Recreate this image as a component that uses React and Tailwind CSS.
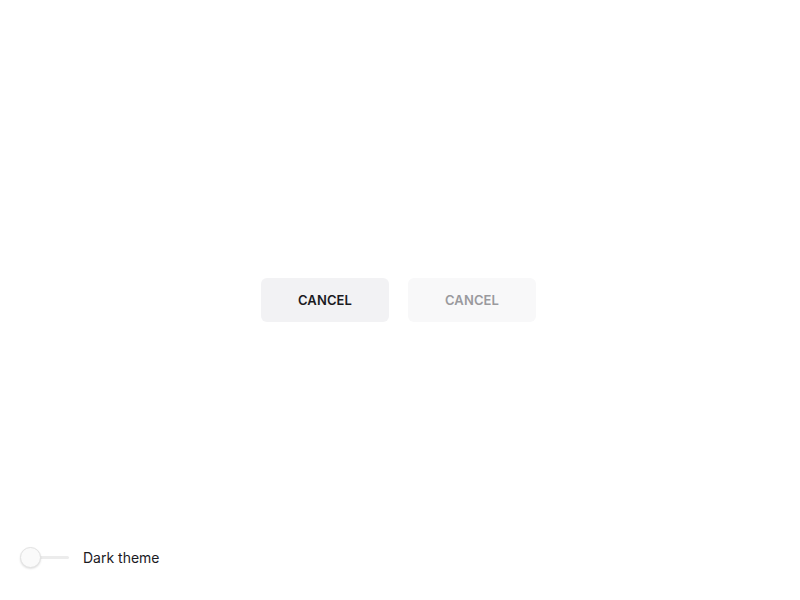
import { useState } from 'react';

const App = () => {
  const [dark, setDark] = useState(false);

  return (
    <div className="relative h-[600px] w-full bg-white font-['Inter',sans-serif]">
      <div className="flex h-full items-center justify-center gap-[19px] pr-[3px]">
        <button className="h-[44px] w-[128px] rounded-[6px] bg-[#f2f2f4] pt-[2px] text-[13px] font-semibold tracking-[0.1px] text-[#1b1b1f]">
          CANCEL
        </button>
        <button disabled className="h-[44px] w-[128px] rounded-[6px] bg-[#f8f8f9] pt-[2px] text-[13px] font-semibold tracking-[0.1px] text-[#9a9a9e]">
          CANCEL
        </button>
      </div>

      <label className="absolute bottom-[32px] left-[20px] flex items-center gap-[14px]">
        <button onClick={() => setDark(!dark)} className="relative flex h-[21px] w-[49px] items-center">
          <span className="ml-[10px] h-[3px] w-[39px] rounded-full bg-[#ececec]" />
          <span className="absolute left-0 top-0 h-[21px] w-[21px] rounded-full border border-[#e2e2e2] bg-[#fafafa] shadow-[0_1px_2px_rgba(0,0,0,0.12)]" />
        </button>
        <span className="text-[14px] text-[#1b1b1f]">Dark theme</span>
      </label>
    </div>
  );
};

export default App;
